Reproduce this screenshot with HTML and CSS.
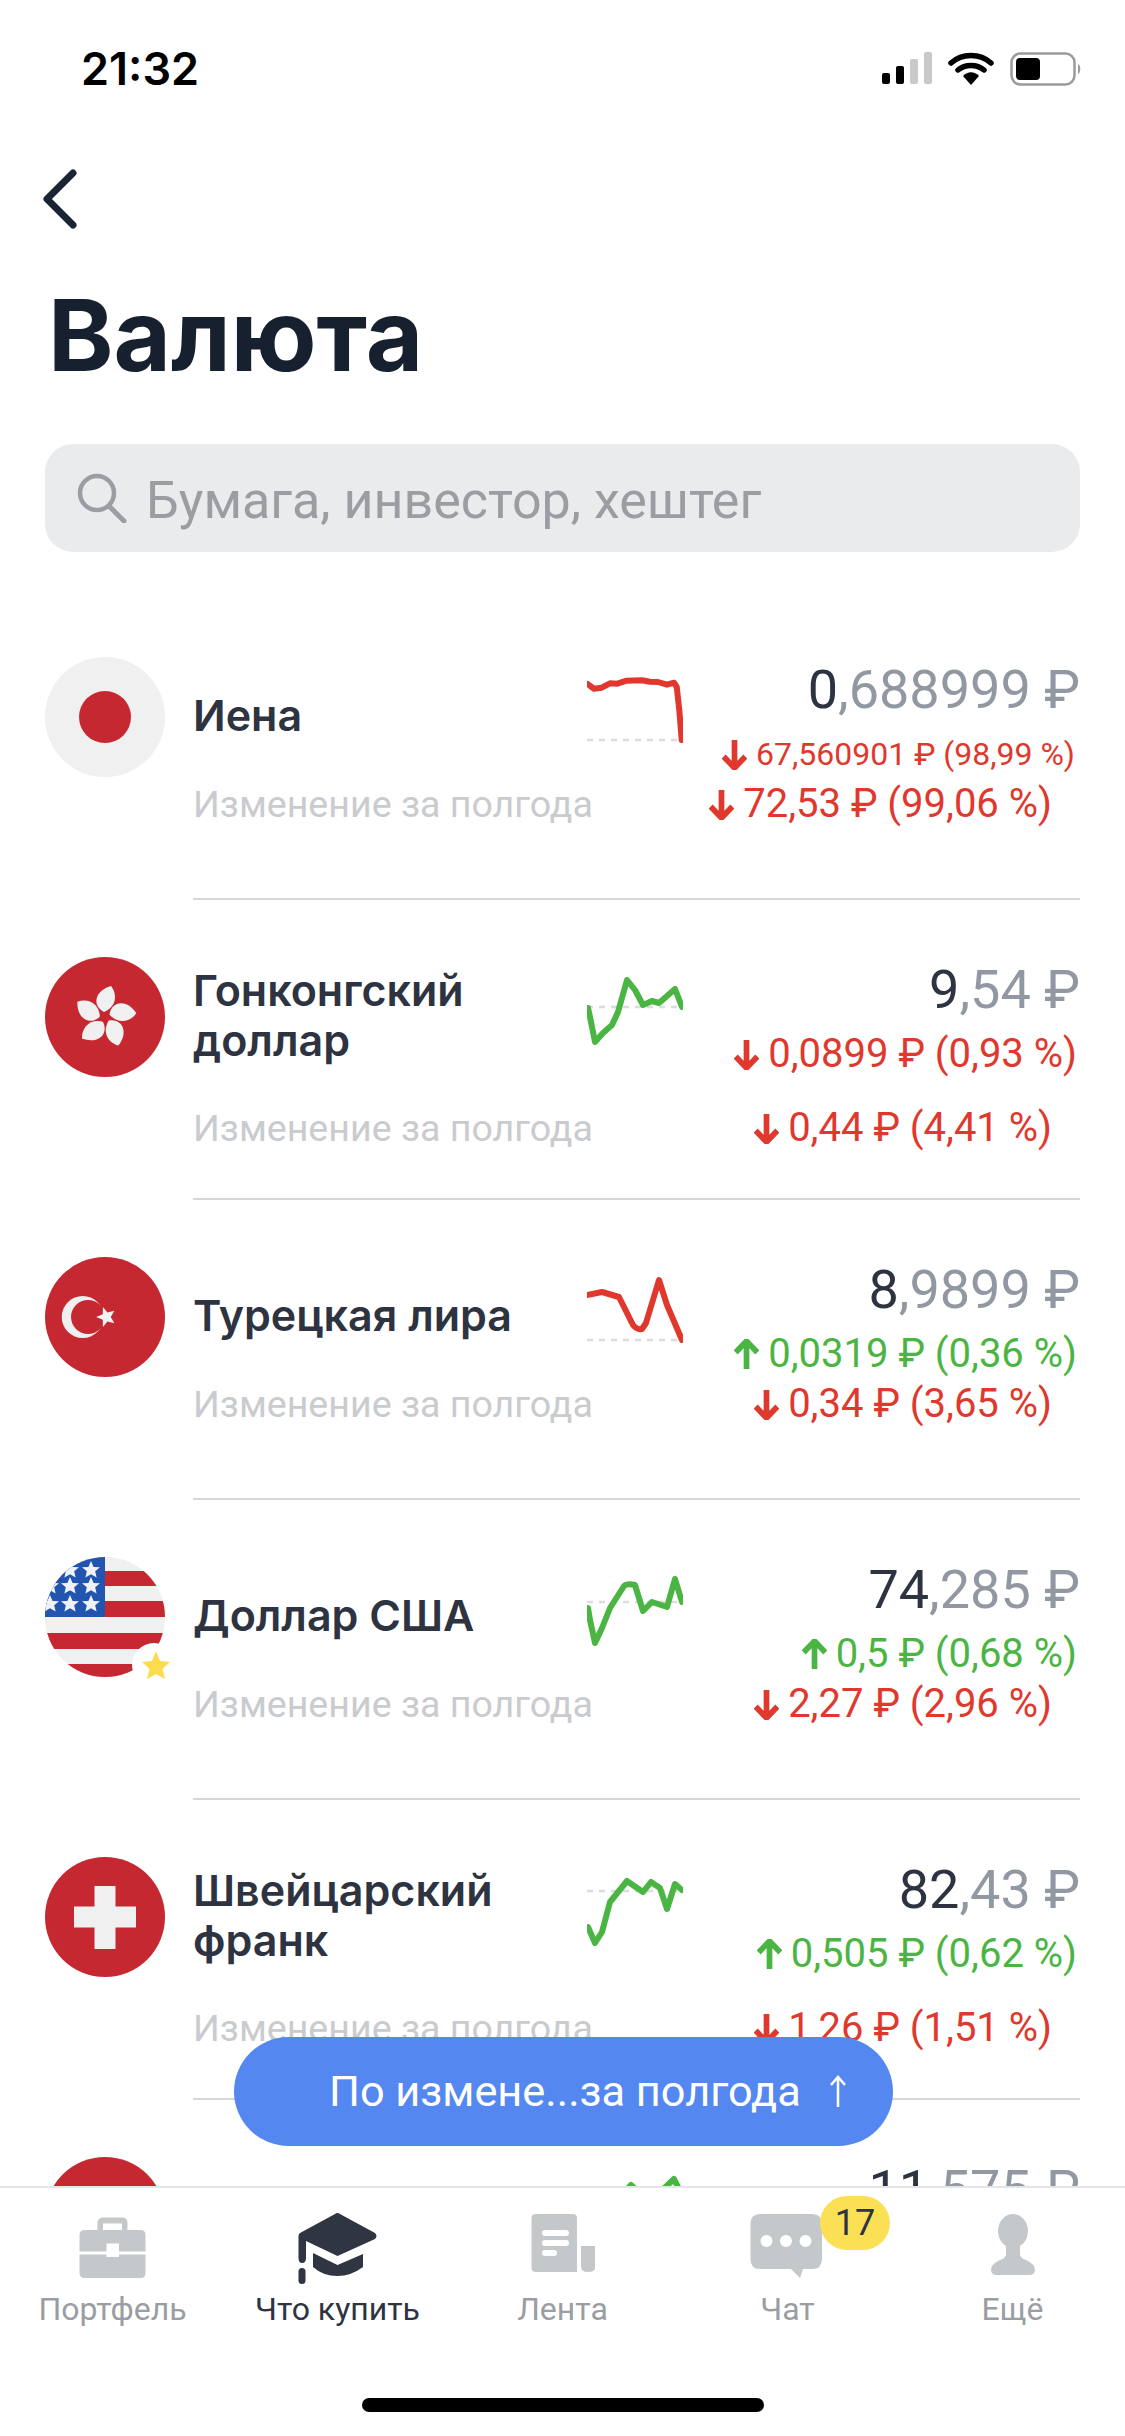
FILE: index.html
```html
<!DOCTYPE html>
<html lang="ru">
<head>
  <meta charset="UTF-8" />
  <title>Валюта</title>
  <link rel="stylesheet" href="styles.css">
</head>
<body>
  <svg class="defs" width="0" height="0">
    <defs>
      <g id="arrow"><path d="M12 1V28M1.500 17L12 28L22.500 17" fill="none" stroke="currentColor" stroke-width="5.500"/></g>
      <path id="star" d="M0 -9L2.600 -2.900L9 -2.800L4.200 1.300L5.600 7.600L0 4.300L-5.600 7.600L-4.200 1.300L-9 -2.800L-2.600 -2.900Z" fill="#f0f2f5"/>
      <path id="petal" d="M-1 -5C-13 -11 -11 -26 6 -31C13 -22 11 -10 -1 -5Z" fill="#f0f0f0"/>
    </defs>
  </svg>
  <div class="screen">
    <div class="status">
      <span class="time">21:32</span>
      <div class="status-icons">
        <svg width="50" height="32" viewBox="0 0 50 32"><rect x="0" y="21" width="8" height="11" rx="2"/><rect x="14" y="14" width="8" height="18" rx="2"/><rect x="28" y="7" width="8" height="25" rx="2" fill="#c9c9c9"/><rect x="42" y="0" width="8" height="32" rx="2" fill="#c9c9c9"/></svg>
        <svg width="46" height="34" viewBox="0 0 46 34"><path d="M3 11C14 1 32 1 43 11M10 18C17 12 29 12 36 18" fill="none" stroke="#000" stroke-width="5.500" stroke-linecap="round"/><path d="M15 24C20 19 26 19 31 24L23 33Z"/></svg>
        <svg width="72" height="34" viewBox="0 0 72 34"><rect x="1.500" y="1.500" width="63" height="31" rx="9" fill="none" stroke="#9b9b9b" stroke-width="2.500"/><rect x="6" y="6" width="24" height="22" rx="4"/><path d="M68 12C71 13 71 21 68 22Z" fill="#9b9b9b"/></svg>
      </div>
    </div>

    <div class="nav">
      <svg width="34" height="60" viewBox="0 0 34 60"><path d="M30 4L4 30L30 56" fill="none" stroke="#1a2433" stroke-width="7" stroke-linecap="round" stroke-linejoin="round"/></svg>
    </div>

    <h1 class="title">Валюта</h1>

    <div class="search">
      <svg width="50" height="50" viewBox="0 0 50 50"><circle cx="20" cy="20" r="17" fill="none" stroke="#9a9da2" stroke-width="4.500"/><path d="M32 33L47 48" stroke="#9a9da2" stroke-width="5" stroke-linecap="round"/></svg>
      <span>Бумага, инвестор, хештег</span>
    </div>

    <div class="list">
      <div class="row">
        <svg class="flag" viewBox="0 0 120 120"><circle cx="60" cy="60" r="60" fill="#f0f0f0"/><circle cx="60" cy="60" r="26" fill="#c62831"/></svg>
        <div class="row-body">
          <div class="row-top">
            <div class="name">Иена</div>
            <svg class="chart" viewBox="0 0 96 80"><path class="base" d="M0 70H96"/><path class="line red" d="M0.500 14L7 18.700L14.700 17.700L23 13.300L30.300 13.700L39.700 10.700L54.700 10.300L63 11.700L71 12L80 14.700L87 12.700L89.700 16.700L92.300 40L94.700 70"/></svg>
            <div class="prices">
              <div class="price"><b>0</b>,688999 ₽</div>
              <div class="change small red"><svg viewBox="0 0 24 30"><use href="#arrow"/></svg>67,560901 ₽ (98,99 %)</div>
            </div>
          </div>
          <div class="row-bottom">
            <span class="label">Изменение за полгода</span>
            <span class="change red"><svg viewBox="0 0 24 30"><use href="#arrow"/></svg>72,53 ₽ (99,06 %)</span>
          </div>
        </div>
      </div>

      <div class="row wrap">
        <svg class="flag" viewBox="0 0 120 120">
          <circle cx="60" cy="60" r="60" fill="#c62831"/>
          <use href="#petal" transform="translate(60 60)"/>
          <use href="#petal" transform="translate(60 60) rotate(72)"/>
          <use href="#petal" transform="translate(60 60) rotate(144)"/>
          <use href="#petal" transform="translate(60 60) rotate(216)"/>
          <use href="#petal" transform="translate(60 60) rotate(288)"/>
        </svg>
        <div class="row-body">
          <div class="row-top">
            <div class="name">Гонконгский<br>доллар</div>
            <svg class="chart" viewBox="0 0 96 80"><path class="base" d="M0 37H96"/><path class="line green" d="M1 38L3 47L8 72L16 63L25 55L31 42L40 10L48 20L56 35L65 31L72 33L88 19L95 37"/></svg>
            <div class="prices">
              <div class="price"><b>9</b>,54 ₽</div>
              <div class="change red"><svg viewBox="0 0 24 30"><use href="#arrow"/></svg>0,0899 ₽ (0,93 %)</div>
            </div>
          </div>
          <div class="row-bottom">
            <span class="label">Изменение за полгода</span>
            <span class="change red"><svg viewBox="0 0 24 30"><use href="#arrow"/></svg>0,44 ₽ (4,41 %)</span>
          </div>
        </div>
      </div>

      <div class="row">
        <svg class="flag" viewBox="0 0 120 120">
          <circle cx="60" cy="60" r="60" fill="#c62831"/>
          <circle cx="37.700" cy="60" r="21" fill="#f0f0f0"/>
          <circle cx="43" cy="60" r="17" fill="#c62831"/>
          <use href="#star" transform="translate(61 60) rotate(-90) scale(1.100)"/>
        </svg>
        <div class="row-body">
          <div class="row-top">
            <div class="name">Турецкая лира</div>
            <svg class="chart" viewBox="0 0 96 80"><path class="base" d="M0 70H96"/><path class="line red" d="M0 25L15 22L32 27L46 55Q50 60 55 59L59 53L72 10L80 35L95 70"/></svg>
            <div class="prices">
              <div class="price"><b>8</b>,9899 ₽</div>
              <div class="change green"><svg class="up" viewBox="0 0 24 30"><use href="#arrow"/></svg>0,0319 ₽ (0,36 %)</div>
            </div>
          </div>
          <div class="row-bottom">
            <span class="label">Изменение за полгода</span>
            <span class="change red"><svg viewBox="0 0 24 30"><use href="#arrow"/></svg>0,34 ₽ (3,65 %)</span>
          </div>
        </div>
      </div>

      <div class="row">
        <div class="flag-wrap">
          <svg class="flag" viewBox="0 0 120 120">
            <clipPath id="round"><circle cx="60" cy="60" r="60"/></clipPath>
            <g clip-path="url(#round)">
              <rect width="120" height="120" fill="#f0f0f0"/>
              <rect y="14" width="120" height="15" fill="#c62831"/>
              <rect y="44" width="120" height="16" fill="#c62831"/>
              <rect y="76" width="120" height="16" fill="#c62831"/>
              <rect y="107" width="120" height="13" fill="#c62831"/>
              <rect width="60" height="60" fill="#2255b0"/>
              <use href="#star" x="46" y="13"/><use href="#star" x="25" y="13"/>
              <use href="#star" x="46" y="29"/><use href="#star" x="25" y="29"/><use href="#star" x="5" y="29"/>
              <use href="#star" x="46" y="47"/><use href="#star" x="25" y="47"/><use href="#star" x="5" y="47"/>
            </g>
          </svg>
          <svg class="fav" viewBox="0 0 44 44"><circle cx="22" cy="22" r="22" fill="#fff"/><path d="M24 8L28 18L38 19L30.500 26L33 36L24 31L15 36L17.500 26L10 19L20 18Z" fill="#fcdc4d"/></svg>
        </div>
        <div class="row-body">
          <div class="row-top">
            <div class="name">Доллар США</div>
            <svg class="chart" viewBox="0 0 96 80"><path class="base" d="M0 32H96"/><path class="line green" d="M1 38L3 50L8 73L15 58L23 38L37 16Q40 13 48 15L56 41L65 32L80 37L88 9L95 32"/></svg>
            <div class="prices">
              <div class="price"><b>74</b>,285 ₽</div>
              <div class="change green"><svg class="up" viewBox="0 0 24 30"><use href="#arrow"/></svg>0,5 ₽ (0,68 %)</div>
            </div>
          </div>
          <div class="row-bottom">
            <span class="label">Изменение за полгода</span>
            <span class="change red"><svg viewBox="0 0 24 30"><use href="#arrow"/></svg>2,27 ₽ (2,96 %)</span>
          </div>
        </div>
      </div>

      <div class="row wrap">
        <svg class="flag" viewBox="0 0 120 120"><circle cx="60" cy="60" r="60" fill="#c62831"/><path d="M49.500 29H70.500V49.500H91V70.500H70.500V92H49.500V70.500H29V49.500H49.500Z" fill="#f0f0f0"/></svg>
        <div class="row-body">
          <div class="row-top">
            <div class="name">Швейцарский<br>франк</div>
            <svg class="chart" viewBox="0 0 96 80"><path class="base" d="M0 21H96"/><path class="line green" d="M1 57L8 73L15 62L23 32L40 11L56 22L64 12L73 18L80 39L88 14L95 20"/></svg>
            <div class="prices">
              <div class="price"><b>82</b>,43 ₽</div>
              <div class="change green"><svg class="up" viewBox="0 0 24 30"><use href="#arrow"/></svg>0,505 ₽ (0,62 %)</div>
            </div>
          </div>
          <div class="row-bottom">
            <span class="label">Изменение за полгода</span>
            <span class="change red"><svg viewBox="0 0 24 30"><use href="#arrow"/></svg>1,26 ₽ (1,51 %)</span>
          </div>
        </div>
      </div>

      <div class="row">
        <svg class="flag" viewBox="0 0 120 120"><circle cx="60" cy="60" r="60" fill="#c62831"/></svg>
        <div class="row-body">
          <div class="row-top">
            <div class="name"></div>
            <svg class="chart" viewBox="0 0 96 80"><path class="line green" d="M1 50L15 40L30 30L44 15L55 25L70 25L87 9L95 25"/></svg>
            <div class="prices">
              <div class="price"><b>11</b>,575 ₽</div>
            </div>
          </div>
        </div>
      </div>
    </div>

    <div class="sort">
      <span>По измене...за полгода</span>
      <svg width="18" height="34" viewBox="0 0 18 34"><path d="M9 32V2M2 10L9 2L16 10" fill="none" stroke="#fff" stroke-width="2.500"/></svg>
    </div>

    <div class="tabbar">
      <div class="tab">
        <svg viewBox="0 0 80 80"><path d="M24.500 22V15Q24.500 9.500 30 9.500H49Q54.500 9.500 54.500 15V22H49V15.500H30V22Z"/><path d="M6.500 43.500V27Q6.500 22 11.500 22H67.500Q72.500 22 72.500 27V43.500H46V35.500H33.500V43.500Z"/><path d="M6.500 46.500H33.500V49H46V46.500H72.500V65Q72.500 70 67.500 70H11.500Q6.500 70 6.500 65Z"/></svg>
        <span>Портфель</span>
      </div>
      <div class="tab active">
        <svg viewBox="0 0 80 80"><path d="M37 6Q39.500 4 42 6L77 25Q80 28 77 31L39.500 48L8 33V50Q8 55 4 55Q0.500 55 0.500 50V28Q0.500 26 2 25Z"/><path d="M15 45L39.500 57L65 46V59Q53 68 39.500 68Q25 68 15 59Z"/><rect x="0.500" y="60" width="7" height="16" rx="3.500"/></svg>
        <span>Что купить</span>
      </div>
      <div class="tab">
        <svg viewBox="0 0 80 80"><path fill-rule="evenodd" d="M13 6H50Q54 6 54 10V64H13Q8.500 64 8.500 60V10Q8.500 6 13 6ZM22 22Q19 22 19 25Q19 28 22 28H43Q46 28 46 25Q46 22 43 22ZM22 32Q19 32 19 35Q19 38 22 38H43Q46 38 46 35Q46 32 43 32ZM22 42Q19 42 19 45Q19 48 22 48H31Q34 48 34 45Q34 42 31 42Z"/><path d="M58 38H72V60Q72 64 65 64Q58 64 58 58Z"/></svg>
        <span>Лента</span>
      </div>
      <div class="tab">
        <svg viewBox="0 0 80 80"><path fill-rule="evenodd" d="M12 6H64Q74 6 74 16V51Q74 61 64 61H55L52 70L43 61H12Q2.500 61 2.500 51V16Q2.500 6 12 6ZM18.500 27A6 6 0 1 0 18.500 39A6 6 0 1 0 18.500 27ZM38 27A6 6 0 1 0 38 39A6 6 0 1 0 38 27ZM57.500 27A6 6 0 1 0 57.500 39A6 6 0 1 0 57.500 27Z"/></svg>
        <span>Чат</span>
        <div class="badge">17</div>
      </div>
      <div class="tab">
        <svg viewBox="0 0 80 80"><ellipse cx="40" cy="23" rx="15" ry="17"/><path d="M33 36H47V46Q47 50 53 52Q62 56 62 62Q62 67 56 67H24Q18 67 18 62Q18 56 27 52Q33 50 33 46Z"/></svg>
        <span>Ещё</span>
      </div>
      <div class="home"></div>
    </div>
  </div>
</body>
</html>
```

FILE: styles.css
```css
* {
  box-sizing: border-box;
}
body {
  margin: 0;
  background: #fff;
  font-family: Roboto, "Liberation Sans", sans-serif;
}
.defs {
  display: block;
  height: 0;
}
.screen {
  position: relative;
  width: 1125px;
  height: 2436px;
  display: flex;
  flex-direction: column;
  overflow: hidden;
  background: #fff;
}

/* status bar */
.status {
  height: 110px;
  padding: 44px 43px 0 81px;
  display: flex;
  justify-content: space-between;
  align-items: flex-start;
  flex-shrink: 0;
}
.time {
  font-family: Inter, sans-serif;
  font-size: 45px;
  line-height: 50px;
  font-weight: 600;
  color: #000;
}
.status-icons {
  display: flex;
  align-items: flex-start;
  gap: 16px;
  padding-top: 8px;
}

.nav {
  height: 60px;
  margin-top: 59px;
  padding-left: 43px;
  flex-shrink: 0;
}
.nav svg {
  display: block;
}
.title {
  margin: 51px 0 0 48px;
  font-family: Inter, sans-serif;
  font-size: 99px;
  line-height: 110px;
  font-weight: 700;
  color: #17202e;
  flex-shrink: 0;
}
.search {
  margin: 54px 45px 0;
  height: 108px;
  padding: 0 0 0 32px;
  display: flex;
  align-items: center;
  gap: 19px;
  background: #e9ebed;
  border-radius: 28px;
  font-size: 52px;
  color: #9a9da2;
  flex-shrink: 0;
}
.search span {
  padding-top: 4px;
}

/* list */
.list {
  flex: 1;
  min-height: 0;
  margin-top: 48px;
  overflow: hidden;
}
.row {
  height: 300px;
  padding: 0 45px;
  display: flex;
  gap: 28px;
}
.flag {
  display: block;
  width: 120px;
  height: 120px;
  flex-shrink: 0;
}
.row > .flag,
.flag-wrap {
  margin-top: 57px;
}
.flag-wrap {
  position: relative;
  width: 120px;
  height: 120px;
  flex-shrink: 0;
}
.fav {
  position: absolute;
  right: -11px;
  bottom: -10px;
  width: 44px;
  height: 44px;
}
.row-body {
  flex: 1;
  min-width: 0;
  padding-top: 57px;
  border-bottom: 2px solid #d5d7da;
}
.row:last-child .row-body {
  border-bottom: 0;
}
.row-top {
  display: flex;
  align-items: flex-start;
  height: 125px;
}
.wrap .row-top {
  height: 149px;
}
.name {
  width: 394px;
  height: 116px;
  flex-shrink: 0;
  display: flex;
  align-items: center;
  font-family: Inter, sans-serif;
  font-size: 43px;
  line-height: 50px;
  font-weight: 600;
  color: #2d3340;
}
.chart {
  width: 96px;
  height: 80px;
  margin-top: 13px;
  flex-shrink: 0;
}
.chart .base {
  fill: none;
  stroke: #dcdcdc;
  stroke-width: 2.500;
  stroke-dasharray: 6 6;
}
.chart .line {
  fill: none;
  stroke-width: 6;
  stroke-linejoin: round;
  stroke-linecap: round;
}
.chart .red {
  stroke: #e0382d;
}
.chart .green {
  stroke: #4bb543;
}
.prices {
  flex: 1;
  min-width: 0;
  display: flex;
  flex-direction: column;
  align-items: flex-end;
  margin-top: 3px;
}
.price {
  font-size: 54px;
  line-height: 60px;
  color: #9298a1;
  white-space: nowrap;
}
.price b {
  font-weight: 400;
  color: #2d3340;
}
.change {
  display: flex;
  align-items: center;
  font-size: 40px;
  line-height: 50px;
  white-space: nowrap;
}
.prices .change {
  margin-top: 9px;
  margin-right: 3px;
}
.prices .change.small {
  font-size: 32px;
  margin-right: 5px;
}
.change svg {
  width: 25px;
  height: 31px;
  margin-right: 9px;
  flex-shrink: 0;
}
.change svg.up {
  transform: rotate(180deg);
}
.red {
  color: #e0382d;
}
.green {
  color: #4bb543;
}
.row-bottom {
  display: flex;
  align-items: center;
  justify-content: space-between;
  height: 44px;
  padding-right: 28px;
}
.label {
  font-size: 37.600px;
  color: #c9cbce;
  white-space: nowrap;
}

/* floating sort button */
.sort {
  position: absolute;
  left: 234px;
  top: 2037px;
  width: 659px;
  height: 109px;
  padding: 0 0 0 95px;
  display: flex;
  align-items: center;
  gap: 28px;
  background: #5488f0;
  border-radius: 55px;
  font-size: 43.300px;
  color: #fff;
}

/* tab bar */
.tabbar {
  position: relative;
  height: 250px;
  flex-shrink: 0;
  padding-top: 20px;
  display: grid;
  grid-template-columns: repeat(5, 1fr);
  align-items: start;
  background: #fff;
  border-top: 2px solid #e3e5e8;
}
.tab {
  position: relative;
  display: flex;
  flex-direction: column;
  align-items: center;
  gap: 3px;
  font-size: 32px;
  line-height: 36px;
  color: #9a9da2;
}
.tab svg {
  display: block;
  width: 80px;
  height: 80px;
  fill: #c5c8cb;
}
.tab.active {
  color: #2d3340;
}
.tab.active svg {
  fill: #2f3541;
}
.badge {
  position: absolute;
  left: 145px;
  top: -12px;
  width: 70px;
  height: 54px;
  border-radius: 27px;
  background: #fbdf55;
  color: #2d3340;
  font-size: 36px;
  line-height: 54px;
  text-align: center;
}
.home {
  position: absolute;
  left: 362px;
  top: 210px;
  width: 402px;
  height: 14px;
  border-radius: 7px;
  background: #000;
}
```
